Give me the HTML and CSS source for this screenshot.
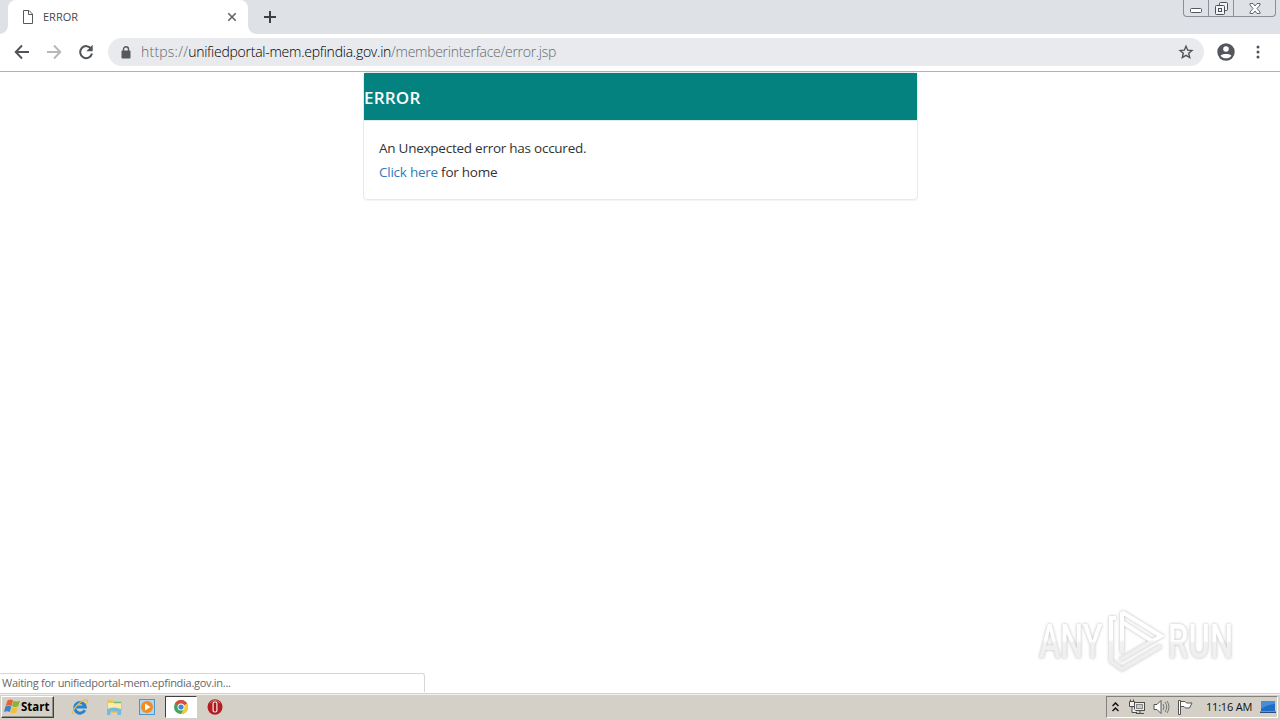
FILE: index.html
```
<!DOCTYPE html>
<html lang="en">
<head>
<meta charset="utf-8">
<title>ERROR</title>
<link rel="stylesheet" href="styles.css">
</head>
<body>
<div class="desktop">
  <header class="tabstrip">
    <div class="tab">
      <svg class="page-icon" width="12" height="14" viewBox="0 0 12 14"><path d="M1.500.5h5.500l3.500 3.500v9.500h-9zM6.500.5v4h4" fill="none" stroke="#55585c" stroke-width="1"/></svg>
      <span class="tab-title">ERROR</span>
      <svg class="tab-close" width="10" height="10" viewBox="0 0 10 10"><path d="M1.300 1.300l7.400 7.400M8.700 1.300L1.300 8.700" stroke="#606367" stroke-width="1.6"/></svg>
    </div>
    <svg class="new-tab" width="12" height="12" viewBox="0 0 12 12"><path d="M6 0v12M0 6h12" stroke="#3c4043" stroke-width="2"/></svg>
    <div class="window-controls">
      <div class="wc wc-min"><svg width="12" height="5" viewBox="0 0 12 5"><rect x=".5" y=".5" width="11" height="4" rx="1" fill="#fff" stroke="#55585f"/></svg></div>
      <div class="wc wc-max"><svg width="13" height="13" viewBox="0 0 13 13"><g fill="#f3f4f6" stroke="#4c4f56"><rect x="4.500" y=".5" width="8" height="8" rx="1"/><rect x=".5" y="3.500" width="9" height="9" rx="1"/><rect x="3.500" y="6.500" width="3" height="3"/></g></svg></div>
      <div class="wc wc-close"><svg width="12" height="11" viewBox="0 0 12 11"><path d="M1 .5h3l2 2.500 2-2.500h3v1.500L8 5.500l3 3.500v1.500H8L6 8l-2 2.500H1V9l3-3.500L1 2z" fill="#fff" stroke="#64676e"/></svg></div>
    </div>
  </header>
  <nav class="toolbar">
    <svg class="nav-icon" width="16" height="16" viewBox="0 0 16 16"><path d="M15 8H2M8 1.500L1.700 8 8 14.500" fill="none" stroke="#505357" stroke-width="1.900"/></svg>
    <svg class="nav-icon" width="16" height="16" viewBox="0 0 16 16"><path d="M1 8h13M8 1.500L14.300 8 8 14.500" fill="none" stroke="#b5b7ba" stroke-width="1.900"/></svg>
    <svg class="nav-icon" width="16" height="16" viewBox="0 0 16 16"><path d="M13.300 5A6 6 0 1 0 14 9.500" fill="none" stroke="#505357" stroke-width="2"/><path d="M14.700.8v6.400H8.300z" fill="#505357"/></svg>
    <div class="omnibox">
      <svg class="lock" width="10" height="13" viewBox="0 0 10 13"><rect x=".5" y="4.500" width="9" height="8" rx="1" fill="#55585c"/><path d="M2.500 5V3.200a2.500 2.500 0 0 1 5 0V5" fill="none" stroke="#55585c" stroke-width="1.400"/></svg>
      <span class="url"><span class="scheme">https://</span><span class="host">unifiedportal-mem.epfindia.gov.in</span>/memberinterface/error.jsp</span>
      <svg class="star" width="16" height="16" viewBox="0 0 16 16"><path d="M8 2.200l1.700 4 4.200.3-3.200 2.800 1 4.200L8 11.300l-3.700 2.200 1-4.200-3.200-2.800 4.200-.3z" fill="none" stroke="#505357" stroke-width="1.400"/></svg>
    </div>
    <svg class="avatar" width="18" height="18" viewBox="0 0 18 18"><circle cx="9" cy="9" r="8.700" fill="#53565b"/><circle cx="9" cy="6" r="2.800" fill="#fff"/><path d="M3.600 12.700C4.400 10.400 13.600 10.400 14.400 12.700 11.700 16.200 6.300 16.200 3.600 12.700z" fill="#fff"/></svg>
    <svg class="menu" width="4" height="14" viewBox="0 0 4 14"><g fill="#505357"><circle cx="2" cy="2" r="1.500"/><circle cx="2" cy="7" r="1.500"/><circle cx="2" cy="12" r="1.500"/></g></svg>
  </nav>
  <main class="page">
    <section class="panel">
      <h1 class="panel-heading"><span class="heading-text">ERROR</span></h1>
      <div class="panel-body">
        <div><span class="message">An Unexpected error has occured.</span></div>
        <div><span class="home-line"><a class="link">Click here</a> for home</span></div>
      </div>
    </section>
    <svg class="watermark" width="240" height="80" viewBox="0 0 240 80">
      <defs>
        <linearGradient id="fade" x1="0" y1="0" x2="0" y2="1"><stop offset=".48" stop-color="#fff"/><stop offset=".53" stop-color="#f1f1f1"/><stop offset="1" stop-color="#ededed"/></linearGradient>
      </defs>
      <g class="mark">
        <text class="mark-text" transform="translate(14 58) scale(.67 1)">ANY</text>
        <text class="mark-text" transform="translate(143 58) scale(.68 1)">RUN</text>
        <path d="M91 18H86V61L97 69 136 46M97 12V53M97 12L136 36 95 60M97 22L127 41" fill="none" stroke="url(#fade)" stroke-width="4"/>
      </g>
    </svg>
    <div class="status"><span class="status-text">Waiting for unifiedportal-mem.epfindia.gov.in...</span></div>
  </main>
  <footer class="taskbar">
    <div class="start">
      <svg width="17" height="16" viewBox="0 0 17 16"><path d="M3.500 1.500c2-1.300 4-1.300 5.500 0L7.500 7C5.500 6 3.500 6 1.600 7z" fill="#e8622f"/><path d="M9.500 1.800c2 1 4 1 6.500 0l-1.800 5.500c-2 1-4 1-6.100 0z" fill="#84b535"/><path d="M1.400 7.600c2-1 4-1 5.900 0L5.800 13C4 12 2 12 0 13z" fill="#3f80c8"/><path d="M7.900 8c2 1 4 1 6 0l-1.600 5.500c-2 1-4 1-5.900 0z" fill="#f3bf35"/></svg>
      <span class="start-text">Start</span>
    </div>
    <div class="launchers">
      <div class="task"><svg width="18" height="18" viewBox="0 0 18 18"><path d="M13.800 12.200A5.300 5.300 0 1 1 14.300 9H5.500" fill="none" stroke="#2484d0" stroke-width="3"/><path d="M2.500 16C-1 13 11 .5 16 2c1 .5.500 2-.5 3.500" fill="none" stroke="#e8bd48" stroke-width="1.300"/></svg></div>
      <div class="task"><svg width="18" height="18" viewBox="0 0 18 18"><path d="M2 2h6l1 2h8v11H2z" fill="#e5c75f"/><path d="M3 5h13v8H3z" fill="#fbeea4"/><path d="M9 4.500h7" stroke="#75b972" stroke-width="1.500"/><path d="M2 11q7-3 14 0v6h-3.500v-3.500h-7V17H2z" fill="#78b9dd"/></svg></div>
      <div class="task"><svg width="18" height="18" viewBox="0 0 18 18"><rect x="1.500" y="1.500" width="15" height="15" fill="#b3d4ed" stroke="#4b96cd"/><circle cx="9" cy="9" r="6" fill="#f18b22"/><path d="M7 5.500L12.500 9 7 12.500z" fill="#fff"/></svg></div>
      <div class="task task-active"><svg width="16" height="16" viewBox="0 0 16 16"><circle cx="8" cy="8" r="7" fill="#42a45c"/><path d="M8 8L1.900 4.500A7 7 0 0 1 14.100 4.500z" fill="#dc4a3e"/><path d="M8 8l6.100-3.500A7 7 0 0 1 8 15L11 9.700z" fill="#f5cc3b"/><circle cx="8" cy="8" r="3.500" fill="#fff"/><circle cx="8" cy="8" r="2.600" fill="#4285d5"/></svg></div>
      <div class="task"><svg width="18" height="18" viewBox="0 0 18 18"><ellipse cx="9" cy="9" rx="7.500" ry="7.700" fill="#b41e23"/><path d="M4 5q5-5 10 0" fill="none" stroke="#df7777"/><rect x="6.500" y="3.500" width="5" height="11" rx="2.300" fill="#f7eeee"/><rect x="7.700" y="4.500" width="2.600" height="9" rx="1" fill="#a51a20"/></svg></div>
    </div>
    <div class="tray">
      <svg class="tray-up" width="7" height="10" viewBox="0 0 7 10"><path d="M.5 4l3-3 3 3M.5 9l3-3 3 3" fill="none" stroke="#111" stroke-width="1.500"/></svg>
      <svg class="tray-net" width="17" height="16" viewBox="0 0 17 16"><g stroke="#4e4e4e" fill="#eee"><rect x="5.500" y="3.500" width="10" height="8"/><rect x="7.500" y="5.500" width="6" height="4" fill="#c9c9c9" stroke="#888"/><path d="M.5 2.500h5v5h-5zM1.500 2V.5M4.500 2V.5M3 7.500v6h5M7 14.500h8M11 12v2"/></g></svg>
      <svg class="tray-sound" width="17" height="16" viewBox="0 0 17 16"><path d="M1 5.500h3L8 1.500v13L4 10.500H1z" fill="#fff" stroke="#555"/><path d="M10 5q2 3 0 6M12 3q3.500 5 0 10M14 2q4 6 0 12" fill="none" stroke="#777"/></svg>
      <svg class="tray-flag" width="17" height="16" viewBox="0 0 17 16"><path d="M1.500 1.500h2v14h-2zM3.500 2.500H8l1.500 1.500h5.500L12.500 9H8.500L7 7.500H3.500z" fill="#fff" stroke="#555"/></svg>
      <span class="clock">11:16 AM</span>
      <svg class="tray-desktop" width="16" height="14" viewBox="0 0 16 14"><path d="M1 1h14v10H1z" fill="#216cc4"/><path d="M1 1h14v3Q8 4 1 9z" fill="#458fd8"/><path d="M0 11.500h16v1.500H0z" fill="#294e78"/></svg>
    </div>
  </footer>
</div>
</body>
</html>
```
FILE: styles.css
```
* { box-sizing: border-box; }
body { margin: 0; overflow: hidden; font-family: "Open Sans", "Noto Sans", sans-serif; }
svg { display: block; flex: none; }
.desktop { width: 1280px; height: 720px; display: flex; flex-direction: column; background: #fff; }
.tabstrip { height: 34px; flex: none; background: #dee1e6; display: flex; align-items: flex-start; }
.tab { height: 34px; width: 240px; margin-left: 8px; background: #fff; border-radius: 8px 8px 0 0; display: flex; align-items: center; padding: 0 11px 0 14px; position: relative; }
.tab::before, .tab::after { content: ""; position: absolute; bottom: 0; width: 8px; height: 8px; }
.tab::before { left: -8px; background: radial-gradient(circle at 0 0, transparent 7.5px, #fff 8px); }
.tab::after { right: -8px; background: radial-gradient(circle at 100% 0, transparent 7.5px, #fff 8px); }
.tab-title { margin-left: 9px; font-size: 11px; line-height: 14px; color: #45484c; }
.tab-close { margin-left: auto; }
.new-tab { margin: 11px 0 0 16px; }
.window-controls { margin-left: auto; margin-right: 4px; width: 93px; height: 17px; border: 1px solid #8b8f97; border-top: 0; border-radius: 0 0 4px 4px; display: flex; }
.wc { display: flex; justify-content: center; align-items: center; border-right: 1px solid #8b8f97; }
.wc-min { width: 25px; padding-top: 4px; }
.wc-max { width: 25px; }
.wc-close { width: 41px; border: 0; }
.toolbar { height: 38px; flex: none; background: #fff; border-bottom: 1px solid #b2b2b4; display: flex; align-items: center; padding: 0 0 1px 14px; }
.nav-icon { margin-right: 16px; }
.omnibox { width: 1096px; height: 28px; margin-left: -2px; border-radius: 14px; background: #e8eaed; display: flex; align-items: center; padding: 0 10px 0 13px; }
.url { margin-left: 10px; font-size: 14px; line-height: 20px; font-weight: 300; color: #66696d; letter-spacing: -.28px; white-space: nowrap; }
.scheme { letter-spacing: .22px; }
.host { color: #000; letter-spacing: -.25px; }
.star { margin-left: auto; }
.avatar { margin-left: 13px; }
.menu { margin-left: 21px; }
.page { flex: 1; min-height: 0; background: #fff; position: relative; }
.panel { width: 555px; height: 128px; margin: 0 auto 0 363px; border: 1px solid #e9e9e9; border-radius: 4px; box-shadow: 0 1px 1px rgba(0,0,0,.05); }
.panel-heading { margin: 0; height: 48px; background: #04827f; border-bottom: 1px solid #d8ecec; color: #fff; font-size: 17px; font-weight: 600; line-height: 50px; }
.heading-text { letter-spacing: .2px; }
.panel-body { padding: 15px; font-size: 13.5px; line-height: 24px; color: #333; letter-spacing: -.25px; }
.link { color: #337ab7; }
.watermark { position: absolute; left: 1025px; top: 528px; }
.mark { filter: drop-shadow(0 0 1.5px rgba(0,0,0,.28)); }
.mark-text { font-family: "Roboto", sans-serif; font-weight: 500; font-size: 48px; fill: url(#fade); }
.status { position: absolute; left: 0; bottom: 1px; width: 425px; height: 19px; border: 1px solid #d6d6d6; border-left: 0; border-bottom: 0; border-radius: 0 3px 0 0; background: #fff; padding-left: 2px; font-size: 11px; line-height: 18px; letter-spacing: -.28px; color: #686868; }
.taskbar { height: 27px; flex: none; background: #d4d0c8; border-top: 1px solid #d4d0c8; box-shadow: inset 0 1px #f4f2ed; display: flex; align-items: center; padding: 0 2px 1px 1px; }
.start { width: 53px; height: 22px; display: flex; align-items: center; padding-left: 2px; border: 1px solid; border-color: #fff #404040 #404040 #fff; box-shadow: inset -1px -1px #929088; font-weight: 700; font-size: 11.5px; color: #000; }
.launchers { display: flex; align-items: center; margin-left: 10px; }
.task { width: 32px; height: 22px; margin-right: 1.7px; display: flex; align-items: center; justify-content: center; }
.task-active { background: #fff; border: 1px solid; border-color: #404040 #fff #fff #404040; }
.tray { margin-left: auto; width: 172px; height: 22px; border: 1px solid; border-color: #85827d #fff #fff #85827d; display: flex; align-items: center; }
.tray-up { margin-left: 5px; }
.tray-net { margin-left: 10px; }
.tray-sound { margin-left: 7px; }
.tray-flag { margin-left: 7px; }
.clock { margin-left: 12px; width: 48px; font-size: 11px; letter-spacing: -.2px; white-space: nowrap; color: #111; }
.tray-desktop { margin-left: 6px; }
```
